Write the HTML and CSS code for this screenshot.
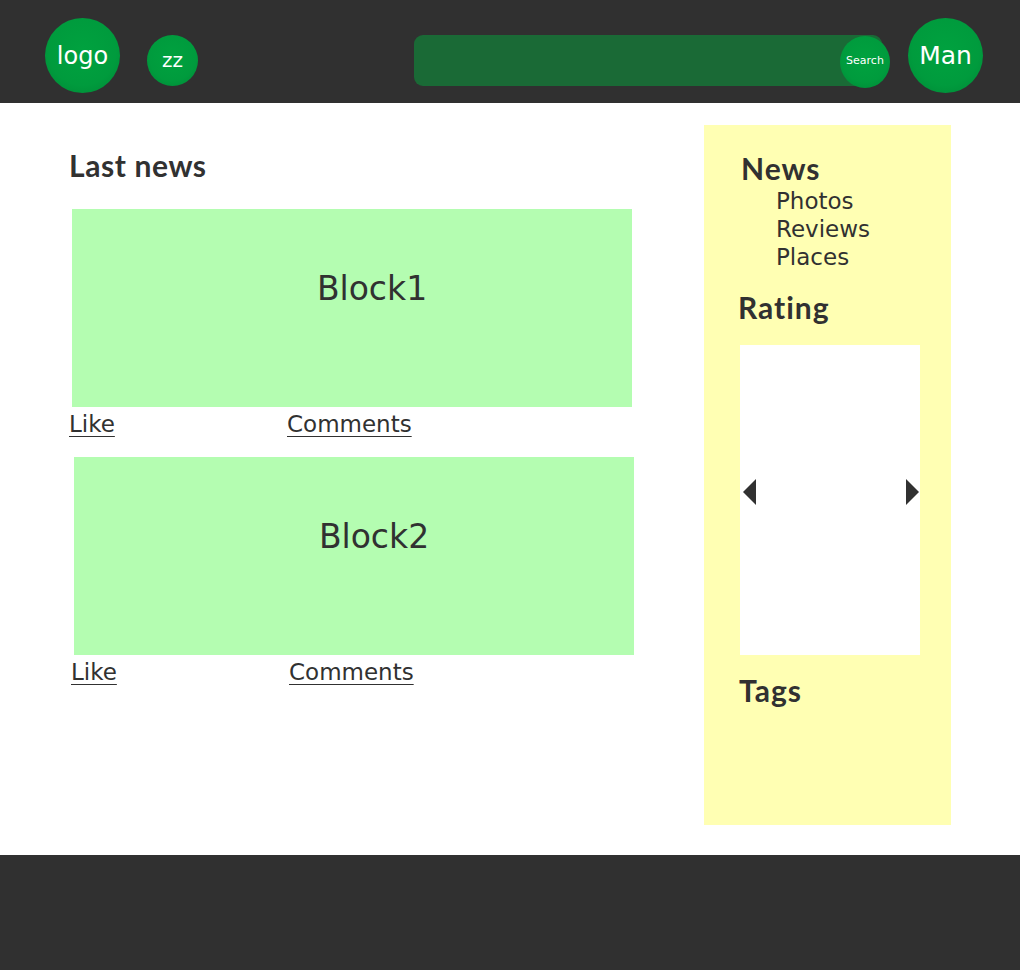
FILE: index.html
```html
<!DOCTYPE html>
<html lang="en">
<head>
<meta charset="utf-8">
<title>Last news</title>
<link rel="stylesheet" href="styles.css">
</head>
<body>
<header class="topbar">
  <div class="bubble bubble-logo">logo</div>
  <div class="bubble bubble-zz">zz</div>
  <form class="search">
    <div class="search-field"></div>
    <button type="button" class="bubble search-btn">Search</button>
  </form>
  <div class="bubble bubble-man">Man</div>
</header>
<main class="page">
  <section class="news">
    <h1 class="heading news-title">Last news</h1>
    <article class="post">
      <div class="post-block">Block1</div>
      <div class="post-links"><a class="link link-like" href="#">Like</a><a class="link" href="#">Comments</a></div>
    </article>
    <article class="post post-second">
      <div class="post-block">Block2</div>
      <div class="post-links"><a class="link link-like" href="#">Like</a><a class="link" href="#">Comments</a></div>
    </article>
  </section>
  <aside class="sidebar">
    <h2 class="heading side-news">News</h2>
    <ul class="side-list">
      <li>Photos</li>
      <li>Reviews</li>
      <li>Places</li>
    </ul>
    <h2 class="heading side-rating">Rating</h2>
    <div class="rating-box">
      <span class="arrow arrow-left"></span>
      <span class="arrow arrow-right"></span>
    </div>
    <h2 class="heading side-tags">Tags</h2>
  </aside>
</main>
<footer class="footer"></footer>
</body>
</html>
```
FILE: styles.css
```css
* { box-sizing: border-box; }
html, body { margin: 0; padding: 0; }
body {
  font-family: "DejaVu Sans", sans-serif;
  color: #313131;
  background: #fff;
  width: 1020px;
}
.topbar {
  height: 103px;
  background: #303030;
  display: flex;
  align-items: flex-start;
  padding: 18px 37px 0 45px;
}
.bubble {
  border-radius: 50%;
  background: radial-gradient(circle at 50% 45%, #00a23f 0%, #009b3d 60%, #008535 100%);
  color: #fff;
  display: flex;
  align-items: center;
  justify-content: center;
  font-family: "DejaVu Sans", sans-serif;
  flex: none;
}
.bubble-logo {
  width: 75px; height: 75px;
  font-size: 24px;
  padding-bottom: 0;
}
.bubble-zz {
  width: 51px; height: 51px;
  margin: 17px 0 0 27px;
  font-size: 20px;
  padding-bottom: 2px;
}
.search {
  margin: 17px 0 0 auto;
  display: flex;
  align-items: flex-start;
}
.search-field {
  width: 468px;
  height: 51px;
  border-radius: 9px;
  background: #1a6a36;
}
.search-btn {
  width: 50px; height: 52px;
  margin: 1px 0 0 -42px;
  border: 0;
  padding: 0 0 3px 0;
  font-size: 11px;
  cursor: pointer;
}
.bubble-man {
  width: 75px; height: 75px;
  margin-left: 18px;
  font-size: 25px;
  padding-bottom: 1px;
}
.page {
  display: flex;
  align-items: flex-start;
  padding: 22px 69px 30px 69px;
}
.heading {
  font-family: Lato, "DejaVu Sans", sans-serif;
  font-weight: 700;
  font-size: 30px;
  letter-spacing: 1px;
  line-height: 36px;
  margin: 0;
}
.news { width: 570px; }
.news-title { margin-top: 22px; letter-spacing: 0.6px; }
.post { margin-top: 26px; }
.post + .post { margin-top: 16px; }
.post-second { margin-left: 2px; }
.post-block {
  margin-left: 3px;
  width: 560px;
  height: 198px;
  background: #b4fdb1;
  display: flex;
  justify-content: center;
  padding: 60px 0 0 40px;
  font-size: 33px;
  line-height: 40px;
  color: #313131;
}
.post-links {
  display: flex;
  font-size: 23px;
  line-height: 34px;
}
.link {
  color: #313131;
  text-decoration: underline;
  text-decoration-thickness: 1px;
  text-underline-offset: 4px;
}
.link-like { width: 218px; }
.sidebar {
  margin-left: auto;
  width: 247px;
  height: 700px;
  background: #ffffb3;
  padding: 25px 0 0 36px;
}
.side-news { margin-left: 1px; }
.side-list {
  list-style: none;
  margin: 1px 0 0 0;
  padding: 0 0 0 36px;
  font-size: 23px;
  line-height: 28px;
}
.side-rating { margin: 18px 0 0 -2px; }
.rating-box {
  margin-top: 20px;
  width: 180px;
  height: 310px;
  background: #fff;
  display: flex;
  align-items: center;
  justify-content: space-between;
  padding: 0 1px 16px 3px;
}
.arrow {
  width: 0; height: 0;
  border-top: 13px solid transparent;
  border-bottom: 13px solid transparent;
}
.arrow-left { border-right: 13px solid #313131; }
.arrow-right { border-left: 13px solid #313131; }
.side-tags { margin: 17px 0 0 -1px; }
.footer {
  height: 115px;
  background: #303030;
}
```
